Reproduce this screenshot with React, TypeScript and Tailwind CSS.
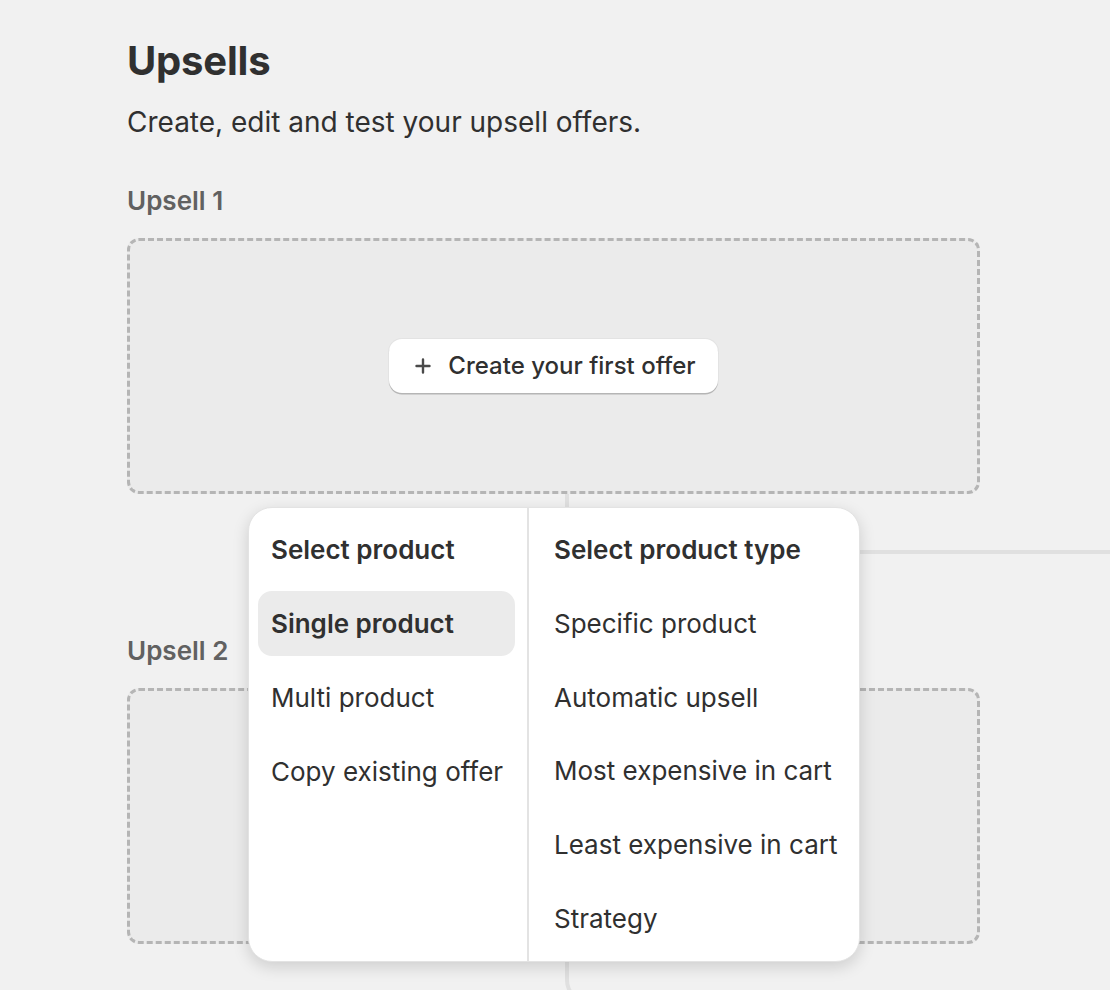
import React from 'react';

const font = { fontFamily: 'Inter, "Noto Sans", sans-serif' };

const leftItems = ['Single product', 'Multi product', 'Copy existing offer'];
const rightItems = [
  'Specific product',
  'Automatic upsell',
  'Most expensive in cart',
  'Least expensive in cart',
  'Strategy',
];

function PlusIcon() {
  return (
    <svg width="16" height="16" viewBox="0 0 16 16" fill="none">
      <path d="M8 1.5v13M1.5 8h13" stroke="#4a4a4a" strokeWidth="2.4" strokeLinecap="round" />
    </svg>
  );
}

function OfferBox({ children }: { children?: React.ReactNode }) {
  return (
    <div className="flex h-[256px] w-[853px] items-center justify-center rounded-[12px] border-[3px] border-dashed border-[#b5b5b5] bg-[#ebebeb]">
      {children}
    </div>
  );
}

function MenuColumn({ title, items, active, className }: { title: string; items: string[]; active?: number; className?: string }) {
  return (
    <div className={`flex flex-col gap-[9px] pt-[9px] pb-[10px] ${className ?? ''}`}>
      <div className="flex h-[65px] items-center px-[13px] text-[26px] font-semibold text-[#303030]">{title}</div>
      {items.map((item, i) => (
        <div
          key={item}
          className={`flex h-[65px] items-center whitespace-nowrap rounded-[14px] px-[13px] text-[26px] text-[#303030] ${
            i === active ? 'bg-[#ebebeb] font-semibold' : ''
          }`}
        >
          {item}
        </div>
      ))}
    </div>
  );
}

export default function App() {
  return (
    <div className="relative h-[990px] w-full overflow-hidden bg-[#f1f1f1]" style={font}>
      <div className="pl-[127px] pt-[39px]">
        <h1 className="text-[40px] leading-[44px] font-bold tracking-[-0.2px] text-[#303030]">Upsells</h1>
        <p className="mt-[23px] text-[28px] leading-[32px] text-[#303030]">Create, edit and test your upsell offers.</p>

        <div className="mt-[47px] text-[26px] leading-[32px] font-semibold text-[#616161]">Upsell 1</div>
        <div className="mt-[21px]">
          <OfferBox>
            <button className="flex h-[54px] items-center gap-[17px] rounded-[13px] bg-white pl-[26px] pr-[22px] text-[24px] font-medium text-[#303030] shadow-[0_1.5px_0_0_#b5b5b5,0_0_0_1px_#e3e3e3]">
              <PlusIcon />
              Create your first offer
            </button>
          </OfferBox>
        </div>
        <div className="ml-[438px] h-[60px] w-[700px] rounded-bl-[24px] border-b-4 border-l-4 border-[#e0e0e0]" />

        <div className="mt-[81px] text-[26px] leading-[32px] font-semibold text-[#616161]">Upsell 2</div>
        <div className="mt-[21px]">
          <OfferBox />
        </div>
        <div className="ml-[438px] h-[60px] w-[700px] rounded-bl-[24px] border-b-4 border-l-4 border-[#e0e0e0]" />
      </div>

      <div className="absolute left-[248px] top-[507px] flex h-[455px] w-[612px] rounded-[24px] border border-[#e3e3e3] bg-white shadow-[0_5px_16px_rgba(0,0,0,0.15)]">
        <MenuColumn title="Select product" items={leftItems} active={0} className="w-[278px] pl-[9px] pr-[12px]" />
        <div className="w-[2px] bg-[#e3e3e3]" />
        <MenuColumn title="Select product type" items={rightItems} className="flex-1 pl-[12px] pr-[8px]" />
      </div>
    </div>
  );
}
